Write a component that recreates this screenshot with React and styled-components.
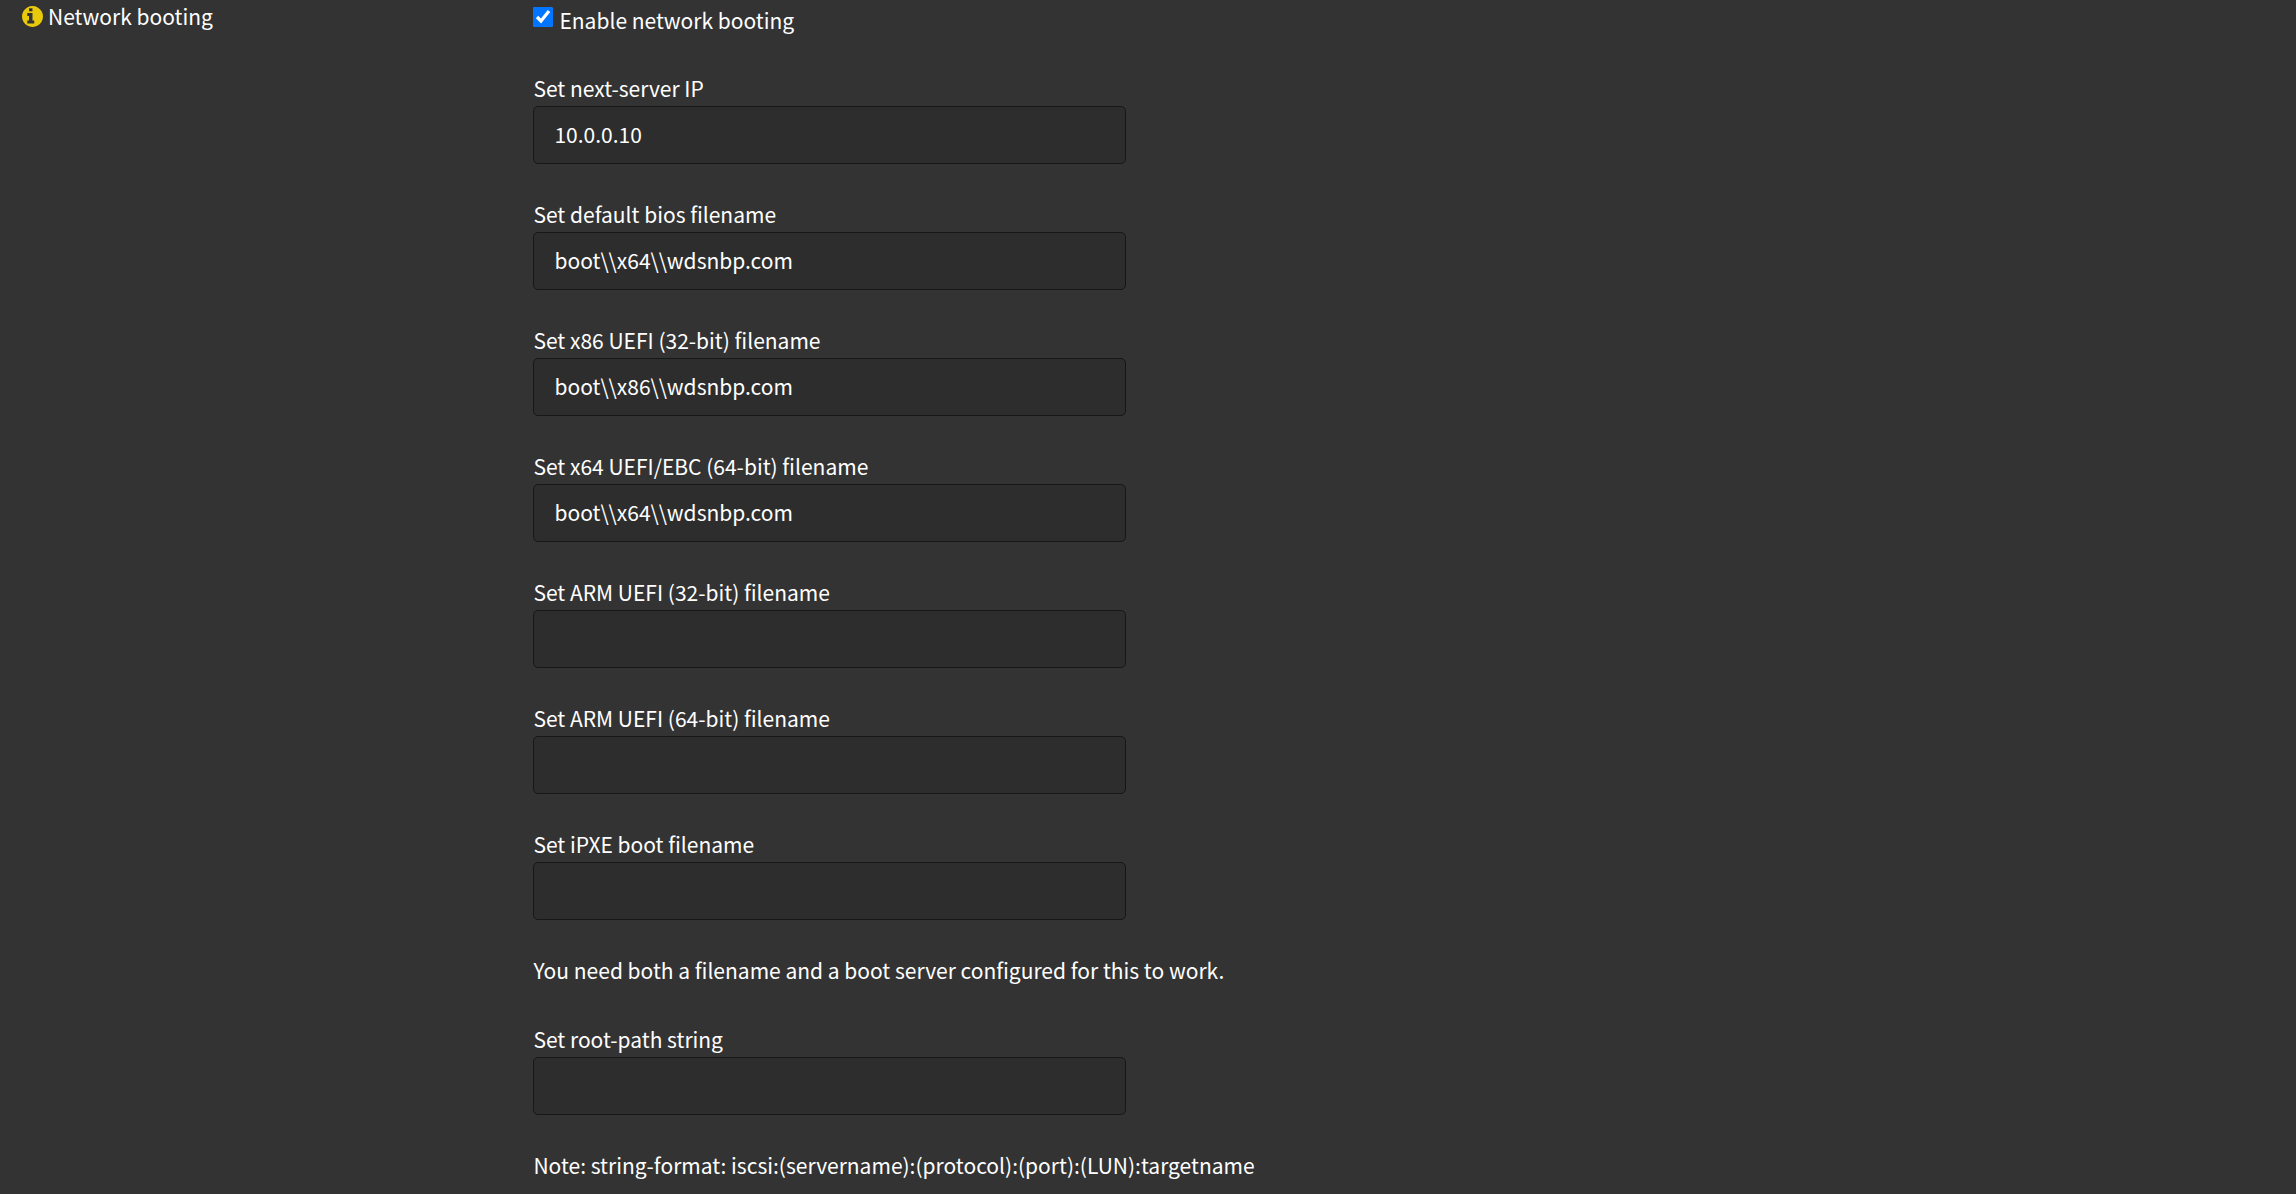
import React from "react";
import styled, { createGlobalStyle } from "styled-components";

const GlobalStyle = createGlobalStyle`
  *, *::before, *::after { box-sizing: border-box; }
  html { background: #333333; }
  body {
    margin: 0;
    background: #333333;
    color: #ffffff;
    font-family: "Noto Sans CJK SC", "Noto Sans", sans-serif;
    font-size: 21px;
    line-height: 32px;
  }
`;

const Page = styled.form`
  display: grid;
  grid-template-columns: 22% minmax(0, 1fr);
  column-gap: 16px;
  padding: 0 22px 9px;
`;

const Heading = styled.div`
  display: flex;
  align-items: flex-start;
  align-self: start;
  gap: 5px;
`;

const Icon = styled.svg`
  width: 21px;
  height: 21px;
  margin-top: 6px;
  fill: #e8c90c;
`;

const Settings = styled.div`
  display: flex;
  flex-direction: column;
  gap: 34px;
  padding-top: 4px;
`;

const Toggle = styled.label`
  display: flex;
  align-items: flex-start;
  gap: 6px;
  padding-bottom: 2px;
`;

const Checkbox = styled.input`
  width: 20px;
  height: 20px;
  margin: 3px 0 0;
  accent-color: #0075ff;
`;

const Field = styled.div`
  display: flex;
  flex-direction: column;
  align-items: flex-start;
  gap: 2px;
`;

const TextInput = styled.input`
  width: 100%;
  max-width: 593px;
  height: 58px;
  padding: 0 20px 2px;
  border: 1px solid #171717;
  border-radius: 5px;
  outline: none;
  background: #2d2d2d;
  color: inherit;
  font: inherit;
`;

const Note = styled.p`
  margin: 0;
  padding-bottom: 3px;
`;

const bootFields = [
  { id: "nextserver", label: "Set next-server IP", value: "10.0.0.10" },
  { id: "filename", label: "Set default bios filename", value: "boot\\\\x64\\\\wdsnbp.com" },
  { id: "filename32", label: "Set x86 UEFI (32-bit) filename", value: "boot\\\\x86\\\\wdsnbp.com" },
  { id: "filename64", label: "Set x64 UEFI/EBC (64-bit) filename", value: "boot\\\\x64\\\\wdsnbp.com" },
  { id: "filename32arm", label: "Set ARM UEFI (32-bit) filename", value: "" },
  { id: "filename64arm", label: "Set ARM UEFI (64-bit) filename", value: "" },
  { id: "filenameipxe", label: "Set iPXE boot filename", value: "" },
];

function InfoIcon() {
  return (
    <Icon viewBox="128 128 1536 1536" aria-hidden="true">
      <path d="M1024 1376v-160q0-14-9-23t-23-9h-96v-512q0-14-9-23t-23-9h-320q-14 0-23 9t-9 23v160q0 14 9 23t23 9h96v320h-96q-14 0-23 9t-9 23v160q0 14 9 23t23 9h448q14 0 23-9t9-23zM896 480v-160q0-14-9-23t-23-9h-192q-14 0-23 9t-9 23v160q0 14 9 23t23 9h192q14 0 23-9t9-23zM1664 896q0 209-103 385.5t-279.5 279.5t-385.5 103t-385.5-103t-279.5-279.5t-103-385.5t103-385.5t279.5-279.5t385.5-103t385.5 103t279.5 279.5t103 385.5z" />
    </Icon>
  );
}

function TextField({ id, label, value }) {
  return (
    <Field>
      <label htmlFor={id}>{label}</label>
      <TextInput id={id} name={id} type="text" defaultValue={value} />
    </Field>
  );
}

export default function App() {
  return (
    <>
      <GlobalStyle />
      <Page>
        <Heading>
          <InfoIcon />
          <span>Network booting</span>
        </Heading>
        <Settings>
          <Toggle htmlFor="netboot">
            <Checkbox id="netboot" name="netboot" type="checkbox" defaultChecked />
            Enable network booting
          </Toggle>
          {bootFields.map((field) => (
            <TextField key={field.id} {...field} />
          ))}
          <Note>You need both a filename and a boot server configured for this to work.</Note>
          <TextField id="rootpath" label="Set root-path string" value="" />
          <Note>Note: string-format: iscsi:(servername):(protocol):(port):(LUN):targetname</Note>
        </Settings>
      </Page>
    </>
  );
}
